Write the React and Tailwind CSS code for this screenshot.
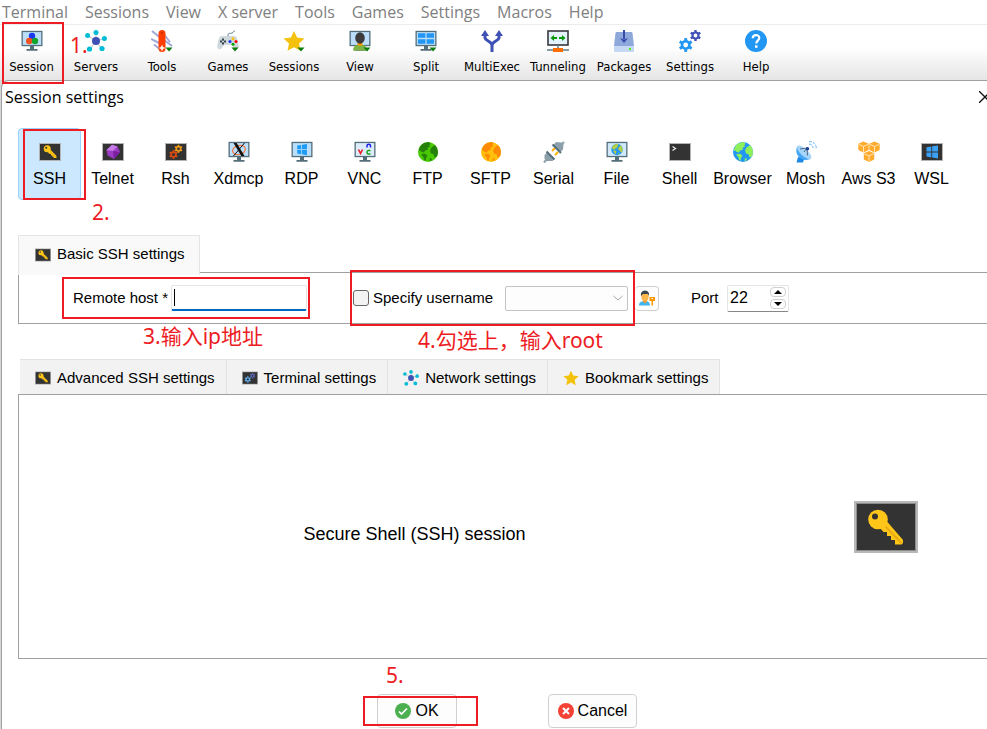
import { useState } from "react";

const Svg = ({ children, size = "size-[22px]", box = "0 0 22 22" }) => (
  <svg viewBox={box} className={`${size} shrink-0`} fill="none" aria-hidden="true">
    {children}
  </svg>
);

const Arrow = () => <path d="M14.5 17.5h7L18 21.5z" fill="#0a7d0a" />;

const Monitor = ({ screen = "#bbdefb", children }) => (
  <>
    <path d="M9 16h4v3h3.500v1.800h-11V19H9z" fill="#546e7a" />
    <rect x="0.500" y="0.800" width="21" height="15.400" fill="#546e7a" />
    <rect x="1.800" y="2.100" width="18.400" height="12.800" fill={screen} />
    {children}
  </>
);

// Dark console frame shared by the SSH, Telnet, Rsh, Shell and WSL icons
const Console = ({ children }) => (
  <>
    <rect x="0" y="2" width="22" height="18" fill="#b4b4b4" />
    <rect x="1" y="3" width="20" height="16" fill="#333" />
    {children}
  </>
);

const KeyShape = () => (
  <>
    <path d="M11 8.300 17.400 14.800V17h-2.800v-1.300h-1.300v-1.300h-1.300v-1.300h-1.300L8.600 11z" fill="#ffc61a" />
    <path d="m10.500 9.800 6.700 6.700" stroke="#e5a913" strokeWidth="0.800" />
    <circle cx="8.200" cy="7.800" r="3.500" fill="#ffc61a" />
    <circle cx="7.200" cy="6.800" r="1" fill="#333" />
  </>
);

const Gear = ({ x, y, r, color }) => (
  <g transform={`translate(${x} ${y}) scale(${r})`}>
    <circle r="0.620" stroke={color} strokeWidth="0.440" />
    {[0, 60, 120, 180, 240, 300].map((a) => (
      <rect key={a} x="-0.240" y="-1.150" width="0.480" height="0.450" fill={color} transform={`rotate(${a})`} />
    ))}
  </g>
);

const Globe = ({ sea, land }) => (
  <>
    <clipPath id="globe"><circle cx="11" cy="11" r="10" /></clipPath>
    <circle cx="11" cy="11" r="10" fill={sea} />
    <path
      clipPath="url(#globe)"
      d="M4 4.200C6 2 9 .9 12 1.100l1.500 1.700-1.300 1.600 1 1.200-2.600 1.200.3 1.900-2.700.8-1.300 2-2.300-.4-1.200-1.600L2 10c0-2 .6-4 2-5.800zM14.500 6.500l3.800-2.800c2 2 3.200 4.400 3.200 7.300 0 1.500-.3 2.900-.9 4.200L17.500 16.500l-1-3.200-2.500-.8-1-3zM4.500 13l3.700-.2 2.300 2-1.500 2.300-.4 2.700-1.500-.8-.7-2.900-1.500-1.500zM13 17l2 .8-.6 1.700-1.900.5z"
      fill={land}
    />
  </>
);

const Windows = ({ color }) => (
  <path d="M5.500 6.300 10.300 5.500v5H5.500zM11.200 5.300 17 4.400v6.100h-5.800zM5.500 11.400h4.800v5L5.500 15.600zM11.200 11.400H17v6.200l-5.800-1z" fill={color} />
);

const StarShape = () => (
  <path d="m11 1 3.100 6.600 7.400.9-5.500 5 1.500 7.300L11 17.200l-6.500 3.600L6 13.500l-5.500-5 7.400-.9z" fill="#f4c20d" />
);

const NetworkShape = () => (
  <>
    <path d="M11 11V3M11 11 2.800 5.500M11 11l8-2.500M11 11l-6 8M11 11l5.500 7.500" stroke="#b0bec5" strokeWidth="1" />
    <circle cx="11" cy="11" r="4" fill="#3f51b5" />
    <g fill="#00bcd4">
      <circle cx="11" cy="2.600" r="2.500" />
      <circle cx="2.600" cy="5.500" r="2.500" />
      <circle cx="19.400" cy="8.500" r="2.500" />
      <circle cx="4.500" cy="19" r="2.600" />
      <circle cx="17" cy="18.500" r="2.600" />
    </g>
  </>
);

const Cube = ({ x, y }) => (
  <g transform={`translate(${x} ${y})`}>
    <path d="M.3 2.300 5.500 0l5.200 2.300v6.200L5.500 11 .3 8.500z" fill="#ffab2e" />
    <path d="m.8 2.900 4.700 2 4.700-2M5.500 5v5.500" stroke="#fff2d8" strokeWidth="0.800" />
  </g>
);

const toolbar = [
  {
    label: "Session",
    icon: (
      <Monitor>
        <circle cx="11" cy="6" r="3.200" fill="#1939f0" />
        <circle cx="8.200" cy="11" r="3.200" fill="#f4511e" />
        <circle cx="14" cy="11" r="3.200" fill="#12a52b" />
      </Monitor>
    ),
  },
  { label: "Servers", icon: <NetworkShape /> },
  {
    label: "Tools",
    icon: (
      <>
        <path d="M1 1 9 7.500M0 9l9 4.500M3 14.500l5 4M13 4.500l6 7.500M13 10l8 6" stroke="#9fa8da" strokeWidth="2" />
        <rect x="7.500" y="0" width="7" height="22" rx="3.500" fill="#ff3d00" />
        <circle cx="11" cy="3" r="1" fill="#bf2c00" />
        <path d="M11 15.500v5M8.500 18h5" stroke="#fff" strokeWidth="1.500" />
        <Arrow />
      </>
    ),
  },
  {
    label: "Games",
    icon: (
      <>
        <path d="M11 6c0-4 2-2 4-3s1-2 3-2" stroke="#607d8b" strokeWidth="1" />
        <path d="M5 6h12c3 0 3.500 3 4.500 8.500.7 4-1.500 6-4 4L15 15H7l-2.500 3.500c-2.500 2-4.700 0-4-4C1.500 9 2 6 5 6z" fill="#cfd8dc" />
        <path d="M6 8.500v6M3 11.500h6" stroke="#37474f" strokeWidth="2" />
        <circle cx="6" cy="11.500" r="1" fill="#eceff1" />
        <circle cx="16" cy="8.800" r="1.500" fill="#ffc107" />
        <circle cx="13" cy="11.500" r="1.500" fill="#1939f0" />
        <circle cx="19" cy="11.500" r="1.500" fill="#f00" />
        <circle cx="16" cy="14.200" r="1.500" fill="#0a0" />
        <Arrow />
      </>
    ),
  },
  {
    label: "Sessions",
    icon: (
      <>
        <StarShape />
        <Arrow />
      </>
    ),
  },
  {
    label: "View",
    icon: (
      <Monitor>
        <path d="M4 20.500c0-4 3-6 7-6s7 2 7 6z" fill="#7cb342" />
        <path d="M8.500 12.500h5v2.500l-2.500 1-2.500-1z" fill="#ff9800" />
        <ellipse cx="11" cy="8" rx="4.800" ry="5.800" fill="#3c3c3c" />
        <Arrow />
      </Monitor>
    ),
  },
  {
    label: "Split",
    icon: (
      <Monitor>
        <path d="M3 3.200h7.400v4.600H3zM11.600 3.200H19v4.600h-7.400zM3 9.200h7.400v4.600H3zM11.600 9.200H19v4.600h-7.400z" fill="#2196f3" />
        <Arrow />
      </Monitor>
    ),
  },
  {
    label: "MultiExec",
    icon: (
      <>
        <path d="M4 4v3.500c0 3.500 7 3.500 7 8V22M18 4v3.500c0 3.500-7 3.500-7 8" stroke="#3f51b5" strokeWidth="3" />
        <path d="M0 6 4 0l4 6zM14 6l4-6 4 6z" fill="#3f51b5" />
      </>
    ),
  },
  {
    label: "Tunneling",
    icon: (
      <>
        <rect x="1" y="1" width="20" height="14" fill="#e3f2fd" stroke="#37373c" strokeWidth="1.600" />
        <path d="M3.500 8 7 5v2h3v2H7v2zM18.500 8 15 5v2h-3v2h3v2z" fill="#079707" />
        <path d="M11 15v4M0 20h22" stroke="#607d8b" strokeWidth="1.500" />
        <rect x="6" y="18" width="10" height="4" fill="#ff6d00" />
      </>
    ),
  },
  {
    label: "Packages",
    icon: (
      <>
        <path d="M4 2h14c1 0 1.500.5 1.600 1.500L21 16H1L2.400 3.500C2.500 2.500 3 2 4 2z" fill="#8fa8dc" />
        <rect x="1" y="16" width="20" height="6" rx="1" fill="#c5d8f3" />
        <path d="M11 0v9" stroke="#3949ab" strokeWidth="2" />
        <path d="m6.800 8 4.200 5 4.200-5-4.200 1.500z" fill="#3949ab" />
        <rect x="16" y="18" width="2" height="2" fill="#5bea0a" />
      </>
    ),
  },
  {
    label: "Settings",
    icon: (
      <>
        <Gear x={6.700} y={15} r={6} color="#2196f3" />
        <Gear x={16.500} y={5.500} r={4.800} color="#3f51b5" />
      </>
    ),
  },
  {
    label: "Help",
    icon: (
      <>
        <circle cx="11" cy="11" r="11" fill="#2196f3" />
        <path d="M7.700 8.300c0-4.300 6.600-4.300 6.600-.3 0 2.300-3 2.600-3 5.500" stroke="#fff" strokeWidth="2.200" />
        <rect x="10" y="15.300" width="2.500" height="2.500" fill="#fff" />
      </>
    ),
  },
];

const sessionTypes = [
  { label: "SSH", icon: <Console><KeyShape /></Console> },
  {
    label: "Telnet",
    icon: (
      <Console>
        <path d="m10 3.800 5.500 1.700 2.500 5.500-6 7-6.500-3.500L4.500 9z" fill="#9c3cc4" />
        <path d="m10 3.800 5.500 1.700-4.500 4.500-6.500-1z" fill="#c77be6" />
        <path d="m11 10 7 1-6 7z" fill="#7b1fa2" />
      </Console>
    ),
  },
  {
    label: "Rsh",
    icon: (
      <Console>
        <Gear x={8.500} y={13.500} r={3.800} color="#d84a10" />
        <Gear x={13.500} y={7.800} r={3.500} color="#f59a15" />
      </Console>
    ),
  },
  {
    label: "Xdmcp",
    icon: (
      <Monitor>
        <ellipse cx="11" cy="9" rx="6.500" ry="4.500" stroke="#ef7b4b" strokeWidth="1.300" transform="rotate(-15 11 9)" />
        <path d="M5.500 2h3.200l7.800 13h-3.200z" fill="#111" />
        <path d="M16.500 2 5.500 15" stroke="#111" strokeWidth="1" />
      </Monitor>
    ),
  },
  {
    label: "RDP",
    icon: (
      <Monitor>
        <g transform="translate(1.500 -.8) scale(.85)"><Windows color="#1e9bf5" /></g>
      </Monitor>
    ),
  },
  {
    label: "VNC",
    icon: (
      <Monitor screen="#dcecfa">
        <path d="m4.500 8.500 2 4 2-4" stroke="#ee1c25" strokeWidth="1.600" />
        <path d="M13 6.500V4.800c0-2 3.500-2 3.500 0v1.700" stroke="#1d1dee" strokeWidth="1.500" />
        <path d="M16.500 9.500h-2c-2 0-2 3.500 0 3.500h2" stroke="#10a010" strokeWidth="1.500" />
      </Monitor>
    ),
  },
  { label: "FTP", icon: <Globe sea="#48c900" land="#26800c" /> },
  { label: "SFTP", icon: <Globe sea="#ffbf0d" land="#ff8b05" /> },
  {
    label: "Serial",
    icon: (
      <>
        <path d="M1 21.500 4 18M18 4l3-3" stroke="#90a4ae" strokeWidth="2.200" />
        <path d="m9 10 3-3M12 14l3-3" stroke="#ffb300" strokeWidth="2" />
        <path d="M4 11.500 11.500 18l-2 2H4l-2.500-2V14zM10.500 4 17.500 11l2.500-2.500.5-5L18.500 1.500 13 1z" fill="#8ca0ab" />
        <path d="m3.500 10.500 8 8M9.500 3.500l8.500 8.500" stroke="#546e7a" strokeWidth="2" />
      </>
    ),
  },
  {
    label: "File",
    icon: (
      <Monitor screen="#cfe8fc">
        <g transform="translate(4.700 2.200) scale(.57)"><Globe sea="#2196f3" land="#b4cf45" /></g>
      </Monitor>
    ),
  },
  {
    label: "Shell",
    icon: (
      <Console>
        <path d="m3.500 5.500 3 2-3 2" stroke="#eee" strokeWidth="1.200" />
      </Console>
    ),
  },
  { label: "Browser", icon: <Globe sea="#2196f3" land="#8df05a" /> },
  {
    label: "Mosh",
    icon: (
      <>
        <path d="m3 16-1.500 5.500H8L9.500 17z" fill="#1e88e5" />
        <path d="M2.500 5 16 17.500c-4 2.500-9 1.500-12-1.500S.5 8.500 2.500 5z" fill="#42a5f5" />
        <ellipse cx="9.200" cy="11.300" rx="9.200" ry="3.600" transform="rotate(43 9.200 11.300)" fill="#a5d5fa" />
        <path d="m5 8 7-1 .5 7.500M12 7l-3 4" stroke="#4f6980" strokeWidth="1" />
        <circle cx="12.500" cy="7.800" r="1.700" fill="#1a3e91" />
        <path d="M14 3c2.500 0 4 1.700 4 4M14 .5c4 0 7.300 2.500 7.300 7" stroke="#64b5f6" strokeWidth="1" strokeDasharray="3 1" />
      </>
    ),
  },
  {
    label: "Aws S3",
    icon: (
      <>
        <Cube x={0} y={0.500} />
        <Cube x={11} y={0.500} />
        <Cube x={5.500} y={10} />
      </>
    ),
  },
  { label: "WSL", icon: <Console><Windows color="#3ba1f5" /></Console> },
];

const settingsTabs = [
  { label: "Advanced SSH settings", icon: <Console><KeyShape /></Console> },
  {
    label: "Terminal settings",
    icon: (
      <Console>
        <Gear x={8} y={13} r={3.800} color="#64b5f6" />
        <Gear x={14.500} y={8} r={3.200} color="#5c6bc0" />
      </Console>
    ),
  },
  { label: "Network settings", icon: <NetworkShape /> },
  { label: "Bookmark settings", icon: <StarShape /> },
];

const menus = ["Terminal", "Sessions", "View", "X server", "Tools", "Games", "Settings", "Macros", "Help"];

const Highlight = ({ className }) => (
  <span className={`pointer-events-none absolute z-20 border-[2px] border-[#ed1c24] ${className}`} />
);

const Note = ({ children, className = "" }) => (
  <p className={`text-[21px] leading-6 text-[#ed1c24] font-['Noto_Sans','Noto_Sans_CJK_SC',sans-serif] ${className}`}>{children}</p>
);

const App = () => {
  const [session, setSession] = useState("SSH");
  const [host, setHost] = useState("");
  const [useName, setUseName] = useState(false);
  const [port, setPort] = useState(22);

  return (
    <div className="min-h-screen overflow-hidden bg-white text-black font-['Liberation_Sans',Arial,sans-serif]">
      <nav className="flex h-6 items-center gap-[17px] pl-[2px] text-base text-[#808080] font-['Open_Sans',sans-serif]">
        {menus.map((m) => (
          <button key={m} className="whitespace-nowrap">{m}</button>
        ))}
      </nav>

      <header className="relative flex h-14 border-t border-[#ececec] bg-linear-to-b from-white from-40% to-[#e5e5e5]">
        {toolbar.map((t) => (
          <button
            key={t.label}
            className="flex w-[66px] shrink-0 flex-col items-center gap-1 pt-[5px] text-[13px] leading-[22px] first:w-[63px] font-['DejaVu_Sans_Condensed','DejaVu_Sans',sans-serif]"
          >
            <Svg>{t.icon}</Svg>
            {t.label}
          </button>
        ))}
        <Highlight className="-top-[3px] left-[2px] h-[62px] w-[62px]" />
        <Note className="absolute top-2 left-[70px]">1.</Note>
      </header>

      <div className="bg-[#d6d6d6] pl-px">
        <main className="rounded-tl-lg border-t border-l border-[#a0a0a0] bg-white pb-px">
          <div className="flex h-8 items-center justify-between pl-[3px]">
            <h1 className="text-base font-['Open_Sans',sans-serif]">Session settings</h1>
            <button aria-label="Close" className="-mr-1">
              <Svg size="size-3" box="0 0 12 12">
                <path d="m0 0 12 12M12 0 0 12" stroke="#111" strokeWidth="1.300" />
              </Svg>
            </button>
          </div>

          <div className="pt-[15px] pl-4">
            <div className="relative flex">
              {sessionTypes.map((s) => (
                <button
                  key={s.label}
                  onClick={() => setSession(s.label)}
                  className={`flex h-[72px] w-[63px] shrink-0 flex-col items-center gap-1 rounded-sm border pt-3 leading-6 whitespace-nowrap ${
                    session === s.label ? "border-[#99d1ff] bg-[#cce8ff]" : "border-transparent"
                  }`}
                >
                  <Svg>{s.icon}</Svg>
                  {s.label}
                </button>
              ))}
              <Highlight className="top-px left-[5px] h-[71px] w-[63px]" />
            </div>

            <div className="h-[35px] pl-[74px]">
              <Note>2.</Note>
            </div>

            <div className="relative z-10 -mb-[3px] flex">
              <button className="flex h-10 items-center gap-[6px] border border-b-0 border-[#e5e5e5] bg-[#f9f9f9] pr-[14px] pb-[2px] pl-4 text-[15px]">
                <Svg size="size-4"><Console><KeyShape /></Console></Svg>
                Basic SSH settings
              </button>
            </div>
            <form className="flex h-[52px] items-center border border-r-0 border-[#a0a0a0] text-[15px]">
              <div className="relative ml-[43px] flex h-[42px] w-[248px] items-center justify-between pr-[3px] pl-[11px]">
                <label htmlFor="host" className="whitespace-nowrap">Remote host *</label>
                <div className="flex h-[26px] w-[136px] items-center rounded-xs border border-b-2 border-[#e5e5e5] border-b-[#0067c0] pl-[2px]">
                  {host === "" && <span className="h-[17px] w-px bg-black" />}
                  <input id="host" value={host} onChange={(e) => setHost(e.target.value)} className="w-full min-w-0 outline-none" />
                </div>
                <Highlight className="inset-0" />
              </div>

              <div className="relative ml-10 flex h-[50px] w-[285px] items-center pl-[3px]">
                <input
                  id="use-name"
                  type="checkbox"
                  checked={useName}
                  onChange={(e) => setUseName(e.target.checked)}
                  className="size-4 appearance-none rounded-[3px] border border-[#666] bg-[#f3f3f3] checked:bg-[#0067c0]"
                />
                <label htmlFor="use-name" className="ml-1 whitespace-nowrap">Specify username</label>
                <div className="relative mr-[7px] ml-auto flex items-center">
                  <select
                    aria-label="Username"
                    disabled={!useName}
                    className="h-[25px] w-[123px] appearance-none rounded-xs border border-[#c4c4c4] bg-[#fdfdfd]"
                  />
                  <span className="pointer-events-none absolute right-[5px]">
                    <Svg size="size-[10px]" box="0 0 10 10">
                      <path d="m0.500 3 4.500 4 4.500-4" stroke="#a8a8a8" />
                    </Svg>
                  </span>
                </div>
                <Highlight className="inset-x-0 -inset-y-[3px]" />
              </div>

              <button
                type="button"
                aria-label="Manage credentials"
                className="flex h-[25px] w-6 items-center justify-center rounded-sm border border-l-0 border-[#d0d0d0] bg-[#fdfdfd]"
              >
                <Svg size="size-4" box="0 0 16 16">
                  <path d="M0 15.500c0-3.500 2.500-4.500 6-4.500s5 1.500 5 4.500z" fill="#3fb5ef" />
                  <path d="M4 9.500h4V12l-2 1.500L4 12z" fill="#e89a3c" />
                  <ellipse cx="6" cy="6.500" rx="3.700" ry="4.500" fill="#ffb74d" />
                  <path d="M2 6C1.500 2.500 3 1 6 .5 9 1 10.500 2.500 10 6L9 4H4z" fill="#37474f" />
                  <path d="M10.500 7h5.500v4h-2v4.500h-1.500V11h-2z" fill="#ff9800" />
                  <rect x="12.500" y="8" width="1.500" height="1" fill="#fff" />
                </Svg>
              </button>

              <label htmlFor="port" className="ml-8 w-[36px] shrink-0">Port</label>
              <div className="flex h-[27px] w-[62px] shrink-0 items-center justify-between rounded-xs border border-[#e5e5e5] border-b-[#868686] px-[2px]">
                <input
                  id="port"
                  inputMode="numeric"
                  value={port}
                  onChange={(e) => setPort(Number(e.target.value) || 0)}
                  className="w-8 min-w-0 text-base outline-none"
                />
                <div className="flex flex-col gap-[2px]">
                  {[1, -1].map((d) => (
                    <button
                      key={d}
                      type="button"
                      aria-label={d > 0 ? "Increase port" : "Decrease port"}
                      onClick={() => setPort(port + d)}
                      className="flex h-[10px] w-4 items-center justify-center rounded-sm border border-[#cfcfcf] bg-white"
                    >
                      <Svg size="h-1 w-2" box="0 0 8 4">
                        <path d={d > 0 ? "M0 4h8L4 0z" : "M0 0h8L4 4z"} fill="#000" />
                      </Svg>
                    </button>
                  ))}
                </div>
              </div>
            </form>

            <div className="flex h-[35px] pl-[125px]">
              <Note className="w-[275px] shrink-0">3.输入ip地址</Note>
              <Note className="pt-1">4.勾选上，输入root</Note>
            </div>

            <div className="flex pl-[2px] text-[15px]">
              {settingsTabs.map((t) => (
                <button
                  key={t.label}
                  className="flex h-[35px] items-center gap-[6px] border-t border-r border-[#e2e2e2] bg-[#f2f2f2] pt-[2px] pr-[11px] pl-[15px] whitespace-nowrap"
                >
                  <Svg size="size-4">{t.icon}</Svg>
                  {t.label}
                </button>
              ))}
            </div>
            <section className="flex min-h-[265px] items-center border border-r-0 border-[#a0a0a0] pr-[69px]">
              <h2 className="flex-1 pt-[14px] text-center text-lg">Secure Shell (SSH) session</h2>
              <svg viewBox="0 0 64 52" className="ml-11 h-[52px] w-16" aria-hidden="true">
                <rect width="64" height="52" fill="#b8b8b8" />
                <rect x="2.500" y="2.500" width="59" height="47" fill="#333" stroke="#8c8c8c" />
                <path d="M33 20.500 49 39v3l-1.500 1.500H41v-4.500h-4v-4h-4v-4h-3.500L26 27z" fill="#ffc61a" />
                <path d="m31.500 25.500 16 16.500" stroke="#e8ac12" strokeWidth="2" />
                <circle cx="24" cy="18.500" r="9.800" fill="#ffc61a" />
                <circle cx="21" cy="15.500" r="3" fill="#333" />
              </svg>
            </section>

            <Note className="h-[35px] pt-1 pl-[368px]">5.</Note>

            <footer className="flex gap-[91px] pl-[359px]">
              <div className="relative">
                <button className="flex h-[34px] w-20 items-center justify-center gap-1 rounded-sm border border-[#d0d0d0] bg-[#fdfdfd]">
                  <Svg size="size-4" box="0 0 16 16">
                    <circle cx="8" cy="8" r="8" fill="#4caf50" />
                    <path d="m4 8.500 2.500 2.500L12 5.500" stroke="#fff" strokeWidth="1.700" />
                  </Svg>
                  OK
                </button>
                <Highlight className="top-[2px] -left-[14px] h-[30px] w-[115px]" />
              </div>
              <button className="flex h-[34px] w-[89px] items-center justify-center gap-1 rounded-sm border border-[#d0d0d0] bg-[#fdfdfd]">
                <Svg size="size-4" box="0 0 16 16">
                  <circle cx="8" cy="8" r="8" fill="#f44336" />
                  <path d="m5 5 6 6M11 5l-6 6" stroke="#fff" strokeWidth="2" />
                </Svg>
                Cancel
              </button>
            </footer>
          </div>
        </main>
      </div>
    </div>
  );
};

export default App;
